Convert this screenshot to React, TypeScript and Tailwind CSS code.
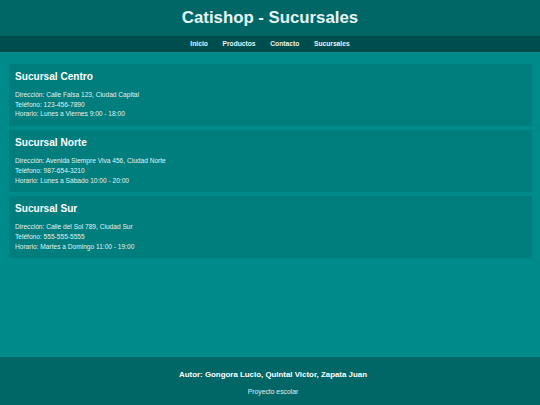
import React from 'react';

const sucursales = [
  {
    nombre: 'Sucursal Centro',
    direccion: 'Calle Falsa 123, Ciudad Capital',
    telefono: '123-456-7890',
    horario: 'Lunes a Viernes 9:00 - 18:00',
  },
  {
    nombre: 'Sucursal Norte',
    direccion: 'Avenida Siempre Viva 456, Ciudad Norte',
    telefono: '987-654-3210',
    horario: 'Lunes a Sábado 10:00 - 20:00',
  },
  {
    nombre: 'Sucursal Sur',
    direccion: 'Calle del Sol 789, Ciudad Sur',
    telefono: '555-555-5555',
    horario: 'Martes a Domingo 11:00 - 19:00',
  },
];

const links = ['Inicio', 'Productos', 'Contacto', 'Sucursales'];

export default function App() {
  return (
    <div className="min-h-screen flex flex-col bg-[#008b8b] text-[#e0f2f1] font-['Liberation_Sans',Arial,sans-serif]">
      <header className="h-[36px] bg-[#006666] flex items-center justify-center">
        <h1 className="text-[16.8px] leading-none font-bold text-[#e6f5f4]">Catishop - Sucursales</h1>
      </header>
      <nav className="h-[16px] bg-[#004d4d] flex items-center justify-center gap-[14.7px]">
        {links.map((l) => (
          <a key={l} className="text-[6.7px] leading-none font-bold text-[#e6f5f4]">
            {l}
          </a>
        ))}
      </nav>

      <main className="flex-1 px-[8.5px] pt-[12px] flex flex-col gap-[4px]">
        {sucursales.map((s) => (
          <section key={s.nombre} className="bg-[#007d7d] px-[6.5px] pt-[6.5px] pb-[7px]">
            <h3 className="text-[10.1px] leading-[12px] font-bold text-white mb-[7.5px]">{s.nombre}</h3>
            <p className="text-[6.6px] leading-[9.7px]">Dirección: {s.direccion}</p>
            <p className="text-[6.6px] leading-[9.7px]">Teléfono: {s.telefono}</p>
            <p className="text-[6.6px] leading-[9.7px]">Horario: {s.horario}</p>
          </section>
        ))}
      </main>

      <footer className="h-[48px] bg-[#006666] flex flex-col items-center pt-[13px] pl-[6px]">
        <p className="text-[7.9px] leading-[9px] font-bold text-white">
          Autor: Gongora Lucio, Quintal Victor, Zapata Juan
        </p>
        <p className="text-[6.75px] leading-[8px] mt-[8.7px]">Proyecto escolar</p>
      </footer>
    </div>
  );
}
